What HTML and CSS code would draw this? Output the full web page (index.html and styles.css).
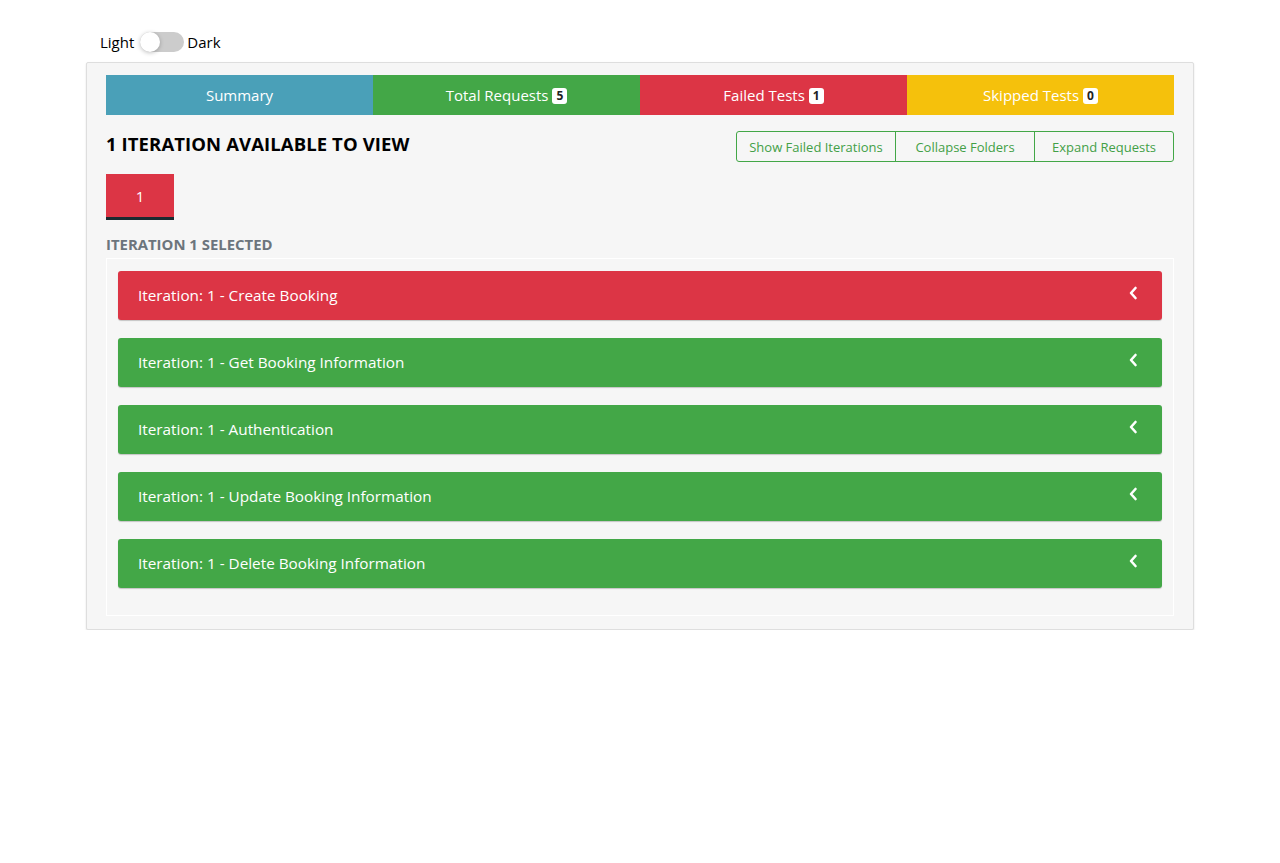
FILE: index.html
```html
<!DOCTYPE html>
<html>
<head>
<meta charset="utf-8">
<link rel="stylesheet" href="styles.css">
</head>
<body>
<div class="toggle-row">
  <span class="lbl">Light</span>
  <span class="switch"><span class="knob"></span></span>
  <span class="lbl">Dark</span>
</div>
<div class="card">
  <div class="tabs">
    <div class="tab t-blue">Summary</div>
    <div class="tab t-green">Total Requests <span class="badge">5</span></div>
    <div class="tab t-red">Failed Tests <span class="badge">1</span></div>
    <div class="tab t-yellow">Skipped Tests <span class="badge">0</span></div>
  </div>
  <div class="head-row">
    <h2 class="title">1 ITERATION AVAILABLE TO VIEW</h2>
    <div class="btn-group">
      <button class="obtn">Show Failed Iterations</button>
      <button class="obtn">Collapse Folders</button>
      <button class="obtn">Expand Requests</button>
    </div>
  </div>
  <div class="iter-row"><div class="iter-btn">1</div></div>
  <div class="selected">ITERATION 1 SELECTED</div>
  <div class="panel">
    <div class="req r-red"><span>Iteration: 1 - Create Booking</span><svg class="chev" viewBox="0 0 10 14" width="10" height="14"><path d="M7.5 2 L3 7 L7.5 12" fill="none" stroke="#fff" stroke-width="2.6" stroke-linecap="round" stroke-linejoin="round"/></svg></div>
    <div class="req r-green"><span>Iteration: 1 - Get Booking Information</span><svg class="chev" viewBox="0 0 10 14" width="10" height="14"><path d="M7.5 2 L3 7 L7.5 12" fill="none" stroke="#fff" stroke-width="2.6" stroke-linecap="round" stroke-linejoin="round"/></svg></div>
    <div class="req r-green"><span>Iteration: 1 - Authentication</span><svg class="chev" viewBox="0 0 10 14" width="10" height="14"><path d="M7.5 2 L3 7 L7.5 12" fill="none" stroke="#fff" stroke-width="2.6" stroke-linecap="round" stroke-linejoin="round"/></svg></div>
    <div class="req r-green"><span>Iteration: 1 - Update Booking Information</span><svg class="chev" viewBox="0 0 10 14" width="10" height="14"><path d="M7.5 2 L3 7 L7.5 12" fill="none" stroke="#fff" stroke-width="2.6" stroke-linecap="round" stroke-linejoin="round"/></svg></div>
    <div class="req r-green"><span>Iteration: 1 - Delete Booking Information</span><svg class="chev" viewBox="0 0 10 14" width="10" height="14"><path d="M7.5 2 L3 7 L7.5 12" fill="none" stroke="#fff" stroke-width="2.6" stroke-linecap="round" stroke-linejoin="round"/></svg></div>
  </div>
</div>
</body>
</html>
```
FILE: styles.css
```css
* { box-sizing: border-box; }
body {
  margin: 0;
  padding: 28px 86px 0 86px;
  font-family: "Open Sans", "Noto Sans", sans-serif;
  color: #000;
  background: #fff;
}
.toggle-row {
  display: flex;
  align-items: center;
  height: 28px;
  padding-left: 14px;
  margin-bottom: 6px;
  font-size: 15px;
}
.lbl { line-height: 28px; }
.switch {
  position: relative;
  width: 44px;
  height: 20px;
  border-radius: 10px;
  background: #ccc;
  margin: 0 3px 0 6px;
  display: inline-block;
}
.knob {
  position: absolute;
  left: 0;
  top: 0;
  width: 20px;
  height: 20px;
  border-radius: 50%;
  background: #fff;
  box-shadow: 0 1px 4px rgba(0,0,0,0.25);
}
.card {
  width: 1108px;
  background: #f6f6f6;
  border: 1px solid #dedede;
  border-radius: 2px;
  box-shadow: 0 1px 2px rgba(0,0,0,0.12);
  padding: 12px 19px 13px 19px;
}
.tabs {
  display: flex;
  height: 40px;
}
.tab {
  flex: 1;
  display: flex;
  align-items: center;
  justify-content: center;
  color: #fff;
  font-size: 15px;
  gap: 4px;
}
.t-blue { background: #4aa0b8; }
.t-green { background: #43a747; }
.t-red { background: #dc3545; }
.t-yellow { background: #f5c10c; }
.badge {
  background: #fff;
  color: #222;
  font-size: 12px;
  font-weight: 700;
  border-radius: 3px;
  padding: 0 4px;
  line-height: 16px;
  height: 16px;
  margin-top: 1px;
}
.head-row {
  display: flex;
  justify-content: space-between;
  align-items: flex-start;
  margin-top: 16px;
}
.title {
  margin: 0;
  font-size: 18.5px;
  font-weight: 700;
  line-height: 26px;
  letter-spacing: 0.1px;
}
.btn-group {
  display: flex;
}
.obtn {
  font-family: inherit;
  font-size: 13px;
  color: #43a047;
  background: transparent;
  border: 1px solid #43a747;
  height: 31px;
  padding: 0 12px;
  margin-left: -1px;
}
.obtn:first-child { border-radius: 3px 0 0 3px; width: 160px; }
.obtn:nth-child(2) { width: 140px; }
.obtn:last-child { border-radius: 0 3px 3px 0; width: 140px; }
.iter-row {
  margin-top: 12px;
  display: flex;
}
.iter-btn {
  width: 68px;
  height: 46px;
  background: #dc3545;
  color: #fff;
  font-size: 15px;
  display: flex;
  align-items: center;
  justify-content: center;
  border-bottom: 3px solid #1b2a30;
  padding-top: 1px;
}
.selected {
  margin-top: 15px;
  color: #6c757d;
  font-size: 14.9px;
  font-weight: 700;
  line-height: 18px;
}
.panel {
  margin-top: 5px;
  border: 1px solid #fff;
  padding: 12px 11px 9px 11px;
}
.req {
  height: 49px;
  border-radius: 3px;
  display: flex;
  align-items: center;
  justify-content: space-between;
  padding: 0 24px 2px 20px;
  color: #fff;
  font-size: 15.3px;
  margin-bottom: 18px;
  box-shadow: 0 1px 1px rgba(0,0,0,0.2);
}
.r-red { background: #dc3545; }
.r-green { background: #43a747; }
.chev { margin-top: -4px; }
```
